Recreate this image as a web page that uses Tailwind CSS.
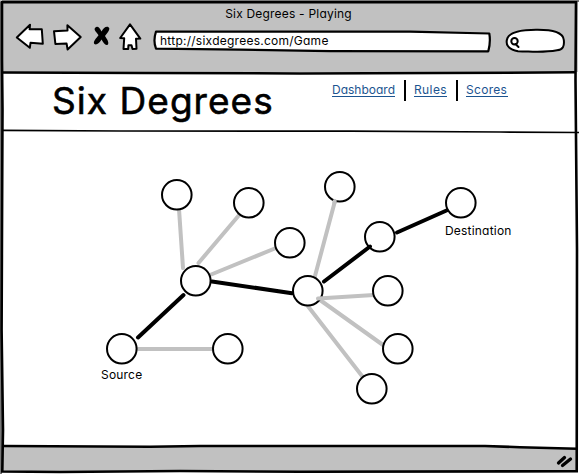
<!DOCTYPE html>
<html lang="en">
<head>
<meta charset="utf-8">
<title>Six Degrees - Playing</title>
<script src="https://cdn.jsdelivr.net/npm/@tailwindcss/browser@4"></script>
</head>
<body class="bg-white">
<div class="relative flex h-[474px] w-[579px] flex-col overflow-hidden bg-white font-['Inter','Open_Sans',sans-serif] text-[12px] text-black [font-feature-settings:'cv11','ss03']">
  <header class="flex h-[72px] shrink-0 flex-col bg-[#c1c1c1] pt-[5px]">
    <h1 class="h-[18px] pr-[2px] text-center leading-[18px]"><span class="tracking-[0.2px]">Six Degrees - Playing</span></h1>
    <div class="flex h-[34px] items-start pl-[14px]">
      <svg class="h-[32px] w-[130px] shrink-0" viewBox="14 23 130 32" fill="#fff" stroke="#000" stroke-width="2" stroke-linejoin="round" stroke-linecap="round">
        <path d="M16.800 37.500L30.000 24.800L29.600 29.300L41.800 29.200L42.800 43.800L30.500 42.800L29.800 47.800Z"/>
        <path d="M54.000 31.200L67.500 30.400L67.400 25.200L80.700 37.000L67.600 49.500L66.600 43.600L55.400 44.000Z"/>
        <g fill="#000" stroke="none">
          <path d="M95 28C97 25.500 99.500 27 101.500 31.500C103.500 28 106 26 108.500 27.200C111 28.800 107.500 32.500 105 36C107 39 109.600 43 107.700 44.700C105.500 46 103.400 43 101.500 39.500C99.500 43 96.500 45.600 94.300 44C92.800 41.800 96 38.500 98.500 35.300C96.500 32 93.500 30 95 28Z"/>
        </g>
        <path d="M130.000 24.300L120.200 38.000L124.200 38.200L123.500 49.000L128.200 49.000L128.400 45.200L131.500 45.200L132.500 49.000L136.500 48.800L136.000 38.800L140.300 38.600Z"/>
      </svg>
      <div class="relative mt-[7px] ml-[9px] h-[23px] w-[340px]">
        <svg class="absolute inset-0 h-[23px] w-[340px]" viewBox="153 30 340 23" fill="#fff" stroke="#000" stroke-width="2.200" stroke-linejoin="round"><path d="M156 31.500L410 31.700L489.300 33.500Q490.800 42 488.300 51.300L330 51.200L240 49.700L156 48.700Q152.900 41 156 31.500Z"/></svg>
        <span class="absolute top-[2px] left-[7px] leading-[18px] tracking-[0.25px]">http://sixdegrees.com/Game</span>
      </div>
      <svg class="mt-[5px] ml-[12px] h-[26px] w-[62px]" viewBox="505 28 62 26" fill="#fff" stroke="#000" stroke-width="2" stroke-linecap="round"><path d="M518 51.200C508 49.500 505 44 507.500 38C511 31 523 29.700 537 29.800C553 29.700 563 32 563.800 40C564.500 46 563 50 557 50.300C542 53 533 51.500 518 51.200Z"/><circle cx="514.500" cy="41.300" r="3.200"/><path d="M515.500 44L518.500 47"/></svg>
    </div>
  </header>
  <section class="flex h-[59px] shrink-0 justify-between pr-[71px] pl-[52px]">
    <h2 class="pt-[6px] text-[37px] leading-[46px] font-normal tracking-[1.05px] [-webkit-text-stroke:0.6px_black]">Six Degrees</h2>
    <nav class="flex items-start pt-[8px] leading-[18px] text-[#1c5490]">
      <a class="mt-[1px] h-[16px] w-[63px] border-b border-[#1c5490]">Dashboard</a>
      <i class="mr-[8px] ml-[9px] h-[21px] w-[2px] bg-black"></i>
      <a class="mt-[1px] h-[16px] w-[33px] border-b border-[#1c5490] tracking-[0.4px]">Rules</a>
      <i class="mr-[8px] ml-[9px] h-[21px] w-[2px] bg-black"></i>
      <a class="mt-[1px] h-[16px] w-[42px] border-b border-[#1c5490] tracking-[0.3px]">Scores</a>
    </nav>
  </section>
  <main class="relative h-[315px] shrink-0">
    <svg class="h-[315px] w-[579px]" viewBox="0 131 579 315" fill="none" stroke-linecap="round">
      <g stroke="#c1c1c1" stroke-width="4">
        <path d="M179 209L183 268M240 214L198.500 263M276 248L210 275M335 201L315 276M138 349H212M318 298.500L374 295M320 300L383 345M307 305L362 376"/>
      </g>
      <g fill="#fff" stroke="#000" stroke-width="2">
        <circle cx="176.800" cy="194.800" r="14.800"/><circle cx="248.800" cy="202.800" r="14.800"/><circle cx="289.800" cy="242.800" r="14.800"/><circle cx="195.800" cy="280.800" r="14.800"/>
        <circle cx="339.800" cy="186.800" r="14.800"/><circle cx="379.800" cy="236.800" r="14.800"/><circle cx="460.800" cy="202.800" r="14.800"/><circle cx="307.800" cy="290.800" r="14.800"/>
        <circle cx="387.800" cy="290.800" r="14.800"/><circle cx="397.800" cy="348.800" r="14.800"/><circle cx="371.800" cy="388.800" r="14.800"/><circle cx="121.800" cy="348.800" r="14.800"/><circle cx="227.800" cy="348.800" r="14.800"/>
      </g>
      <path d="M318 298.500L322 298.200M334.700 201L334.300 203" stroke="#c1c1c1" stroke-width="4"/>
      <path d="M138 337.500L183.500 295M212 281.500L292 293.200M324 281.500L370 246.500M397 232.500L446.500 210.500" stroke="#000" stroke-width="4"/>
    </svg>
    <span class="absolute top-[235px] left-[101px] leading-[18px] tracking-[0.2px]">Source</span>
    <span class="absolute top-[91px] left-[445px] leading-[18px] tracking-[0.2px]">Destination</span>
  </main>
  <footer class="h-[25px] shrink-0 bg-[#c1c1c1]"></footer>
  <svg class="pointer-events-none absolute inset-0 h-[474px] w-[579px]" viewBox="0 0 579 474" fill="none" stroke="#000">
    <path d="M3 445.500L300 446L485 446L577 449V440H3Z" fill="#fff" stroke="none"/>
    <path d="M578 0H579V474H578ZM0 473H579V474H0Z" fill="#fff" stroke="none"/>
    <path d="M0 0H579V2H0ZM0 0V474H2V0Z" fill="#777" stroke="none"/>
    <path d="M2 2.300L576 2.300L575.500 80L577 250L576.700 471.300L300 471.800L180 471L60 472L2.300 471.500L3 430L1.600 330L2.500 110L2 60Z" stroke-width="2.600"/>
    <path d="M3 72.500L140 73L300 73.500L440 73L576 72.300" stroke-width="2.500"/>
    <path d="M3 130.300L120 131L350 131.200L500 132L579 132.500" stroke-width="1.700"/>
    <path d="M3 446L150 446.800L200 446L485 446L520 447.200L577 448.800" stroke-width="2.600"/>
    <path d="M558.500 463L564.500 457.500M562.500 465.500L570.500 459" stroke-width="3.300" stroke-linecap="round"/>
  </svg>
</div>
</body>
</html>
